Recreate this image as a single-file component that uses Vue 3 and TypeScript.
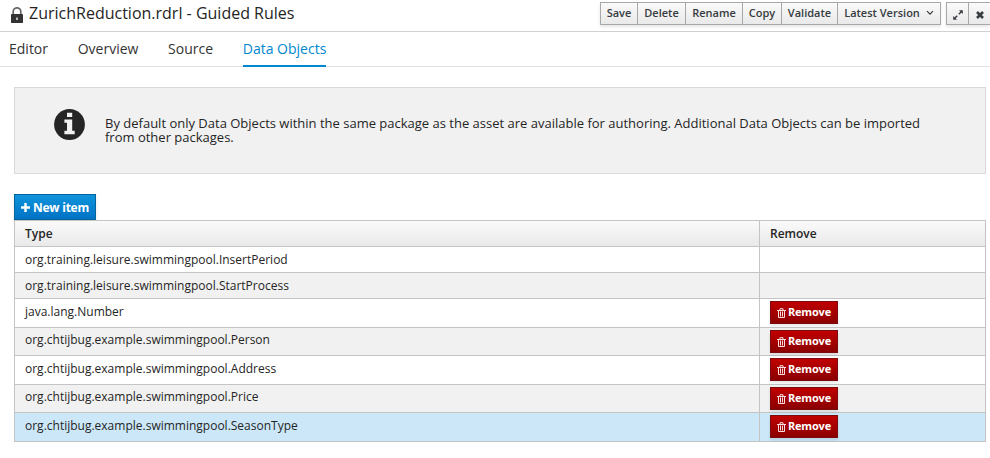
<script setup lang="ts">
import { ref } from 'vue'

interface DataObject {
  type: string
  removable: boolean
}

const actions: string[] = ['Save', 'Delete', 'Rename', 'Copy', 'Validate']
const tabs: string[] = ['Editor', 'Overview', 'Source', 'Data Objects']
const activeTab = ref('Data Objects')
const selected = ref('org.chtijbug.example.swimmingpool.SeasonType')

const items = ref<DataObject[]>([
  { type: 'org.training.leisure.swimmingpool.InsertPeriod', removable: false },
  { type: 'org.training.leisure.swimmingpool.StartProcess', removable: false },
  { type: 'java.lang.Number', removable: true },
  { type: 'org.chtijbug.example.swimmingpool.Person', removable: true },
  { type: 'org.chtijbug.example.swimmingpool.Address', removable: true },
  { type: 'org.chtijbug.example.swimmingpool.Price', removable: true },
  { type: 'org.chtijbug.example.swimmingpool.SeasonType', removable: true },
])

function remove(item: DataObject): void {
  items.value = items.value.filter((i) => i !== item)
}
</script>

<template>
  <div class="page">
    <header class="titlebar">
      <svg class="lock" viewBox="0 0 12 16" width="12" height="16">
        <path d="M2.200 8V4.600a3.800 3.800 0 0 1 7.600 0V8" fill="none" stroke="#666" stroke-width="1.700" />
        <rect x="0" y="7" width="12" height="9" rx=".4" fill="#333" />
        <path d="M5.200 10.500h1.600v2.400H5.200z" fill="#ddd" />
      </svg>
      <h1 class="title">ZurichReduction.rdrl - Guided Rules</h1>
      <div class="group">
        <button v-for="a in actions" :key="a" class="tool" :class="a.toLowerCase()">{{ a }}</button>
        <button class="tool version">
          <span>Latest Version</span>
          <svg viewBox="0 0 8 6" width="8" height="6">
            <path d="M1 1.200l3 3 3-3" fill="none" stroke="#363b40" stroke-width="1.200" />
          </svg>
        </button>
      </div>
      <div class="group window">
        <button class="tool icon" aria-label="Expand">
          <svg viewBox="0 0 10 10" width="10" height="10">
            <path d="M6 .2h3.800V4zM.2 6v3.800H4z" fill="#363b40" />
            <path d="M8.500 1.500L5.800 4.200M1.500 8.500l2.700-2.700" stroke="#363b40" stroke-width="1.500" />
          </svg>
        </button>
        <button class="tool icon" aria-label="Close">
          <svg viewBox="0 0 8 8" width="8" height="8">
            <path d="M1 1l6 6M7 1L1 7" stroke="#363b40" stroke-width="2.600" />
          </svg>
        </button>
      </div>
    </header>

    <nav class="tabs">
      <a
        v-for="t in tabs"
        :key="t"
        class="tab"
        :class="{ active: t === activeTab }"
        @click="activeTab = t"
      >{{ t }}</a>
    </nav>

    <main class="content">
      <section class="notice">
        <svg class="info" viewBox="0 0 31 31" width="31" height="31">
          <circle cx="15.500" cy="15.500" r="15.400" fill="#252525" />
          <path d="M13 3.700h5.200v4.300H13zM10.400 10.400h7.800v11.400h2.500v3.400H10.400v-3.400H13v-8h-2.600z" fill="#f1f1f1" />
        </svg>
        <p class="message">
          By default only Data Objects within the same package as the asset are available for authoring. Additional Data Objects can be imported from other packages.
        </p>
      </section>

      <button class="new-item">
        <svg viewBox="0 0 9 9" width="9" height="9">
          <path d="M4.500 0v9M0 4.500h9" stroke="#fff" stroke-width="2.400" />
        </svg>
        <span>New item</span>
      </button>

      <div class="table">
        <div class="row head">
          <div class="cell type">Type</div>
          <div class="cell">Remove</div>
        </div>
        <div
          v-for="item in items"
          :key="item.type"
          class="row"
          :class="{ selected: item.type === selected, tall: item.removable }"
          @click="selected = item.type"
        >
          <div class="cell type">{{ item.type }}</div>
          <div class="cell">
            <button v-if="item.removable" class="remove" @click.stop="remove(item)">
              <svg viewBox="0 0 9 10" width="9" height="10">
                <path d="M0 2.500h9M3 2V.7h3V2" fill="none" stroke="#f8dede" stroke-width="1" />
                <path d="M1.500 2.500v7h6v-7M3.500 3.500v5M5.500 3.500v5" fill="none" stroke="#f8dede" stroke-width="1" />
              </svg>
              <span>Remove</span>
            </button>
          </div>
        </div>
      </div>
    </main>
  </div>
</template>

<style>
body {
  background: #fff;
}
</style>

<style scoped>
.page {
  width: 990px;
  height: 458px;
  overflow: hidden;
  background: #fff;
  color: #252525;
  font-family: 'Open Sans', 'Noto Sans', sans-serif;
  font-size: 12px;
}

.page * {
  box-sizing: border-box;
}

button {
  margin: 0;
  font-family: inherit;
  white-space: nowrap;
}

svg {
  display: block;
  flex: none;
}

.titlebar {
  display: flex;
  align-items: flex-start;
  height: 32px;
  padding-left: 11px;
  border-bottom: 1px solid #d1d1d1;
}

.lock {
  margin: 7px 6px 0 0;
}

.title {
  flex: 1;
  margin: 0;
  font-size: 16px;
  font-weight: 400;
  line-height: 26px;
  white-space: nowrap;
}

.group {
  display: flex;
  height: 23px;
  margin-top: 2px;
  border: 1px solid #a8a8a8;
  background: linear-gradient(#fafafa, #e9e9e9);
  box-shadow: 0 2px 3px rgba(3, 3, 3, 0.1);
}

.window {
  margin-left: 5px;
  border-right: 0;
}

.tool {
  display: flex;
  align-items: center;
  justify-content: center;
  height: 21px;
  padding: 0;
  border: 0;
  border-right: 1px solid #a8a8a8;
  background: none;
  color: #363b40;
  font-size: 11px;
  font-weight: 600;
  line-height: 20px;
}

.tool:not(.icon) {
  padding-bottom: 1px;
}

.tool:last-child {
  border-right: 0;
}

.save {
  width: 37px;
}

.delete {
  width: 48px;
}

.rename {
  width: 57px;
}

.copy {
  width: 39px;
}

.validate {
  width: 56px;
}

.version {
  width: 102px;
  gap: 6px;
}

.icon {
  width: 22px;
  padding-top: 2px;
}

.icon:last-child {
  width: 21px;
}

.tabs {
  display: flex;
  gap: 29.700px;
  height: 35px;
  padding-left: 9px;
  border-bottom: 1px solid #e1e1e1;
}

.tab {
  height: 35px;
  color: #333;
  font-size: 14px;
  line-height: 34px;
  white-space: nowrap;
  cursor: pointer;
}

.tab.active {
  border-bottom: 2px solid #0088ce;
  color: #0088ce;
}

.content {
  padding: 20px 4px 0 14px;
}

.notice {
  display: flex;
  height: 87px;
  margin-bottom: 20px;
  padding: 21px 50px 0 39px;
  border: 1px solid #dadada;
  background: #f1f1f1;
}

.message {
  margin: 8px 0 0 20px;
  font-size: 13px;
  line-height: 13.500px;
}

.new-item {
  display: flex;
  align-items: center;
  gap: 3px;
  width: 82px;
  height: 26px;
  padding: 0 6px;
  border: 1px solid #00659c;
  background: linear-gradient(#0f94dc, #0072c4);
  color: #fff;
  font-size: 12px;
  font-weight: 700;
  letter-spacing: -0.25px;
  box-shadow: 0 2px 3px rgba(3, 3, 3, 0.1);
}

.table {
  width: 972px;
  border: 1px solid #c4c4c4;
  border-bottom: 0;
}

.row {
  display: grid;
  grid-template-columns: 745px 1fr;
  height: 26px;
  border-bottom: 1px solid #c4c4c4;
  line-height: 25px;
}

.row:nth-child(odd) {
  background: #f1f1f1;
}

.row.head {
  background: linear-gradient(#fafafa, #e9e9e9);
  font-weight: 600;
}

.row.tall {
  height: 28px;
}

.row.tall:nth-child(even) {
  height: 29px;
}

.row.selected {
  background: #cbe7f8;
}

.cell {
  padding-left: 10px;
  white-space: nowrap;
}

.cell.type {
  border-right: 1px solid #c4c4c4;
}

.row.tall:nth-child(odd) .type {
  line-height: 24px;
}

.remove {
  display: flex;
  align-items: center;
  gap: 2px;
  width: 68px;
  height: 23px;
  margin-top: 2px;
  padding: 0 6px 1px;
  border: 1px solid #7a0c10;
  background: linear-gradient(#c00000, #8b0000);
  color: #fff;
  font-size: 11px;
  font-weight: 700;
  letter-spacing: -0.2px;
  line-height: 20px;
  box-shadow: 0 2px 3px rgba(3, 3, 3, 0.1);
}

.remove svg {
  margin-top: 2px;
}
</style>
